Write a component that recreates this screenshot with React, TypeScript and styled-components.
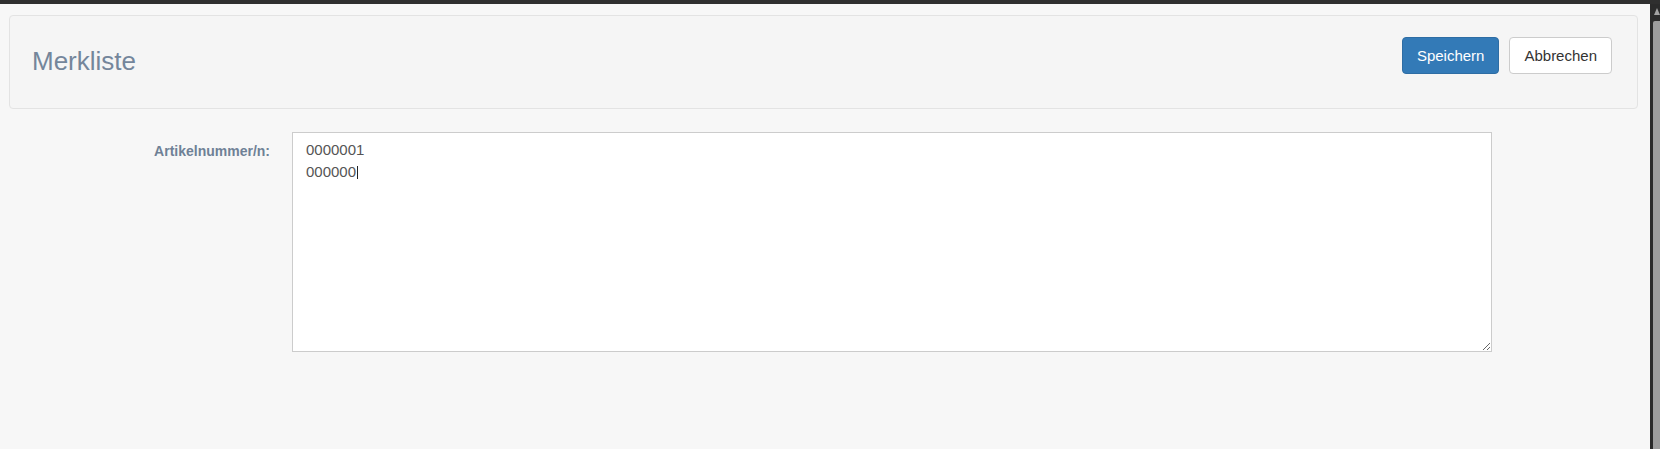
import React from "react";
import styled, { createGlobalStyle } from "styled-components";

const GlobalStyle = createGlobalStyle`
  html, body {
    margin: 0;
    padding: 0;
    background: #f7f7f7;
    font-family: "Liberation Sans", Arial, sans-serif;
  }
  * { box-sizing: border-box; }
`;

const Frame = styled.div`
  display: flex;
  flex-direction: column;
  width: 1660px;
  height: 449px;
  overflow: hidden;
  background: #f7f7f7;
`;

const TopBar = styled.div`
  height: 4px;
  flex: none;
  background: #2f2f2f;
`;

const Body = styled.div`
  flex: 1;
  display: flex;
  min-height: 0;
`;

const Main = styled.main`
  flex: 1;
  min-width: 0;
  padding: 11px 12px 0 9px;
`;

const Rail = styled.div`
  width: 10px;
  flex: none;
  background: #2b2b2b;
  display: flex;
  flex-direction: column;
  align-items: flex-end;
  padding-top: 4px;
  gap: 6px;
`;

const RailArrow = styled.div`
  width: 0;
  height: 0;
  border-left: 3.5px solid transparent;
  border-right: 3.5px solid transparent;
  border-bottom: 7px solid #a3a3a3;
`;

const RailThumb = styled.div`
  width: 7px;
  flex: 1;
  background: #9d9d9d;
  border-radius: 2px 0 0 0;
`;

const Header = styled.div`
  height: 94px;
  background: #f5f5f5;
  border: 1px solid #e3e3e3;
  border-radius: 4px;
  display: flex;
  align-items: flex-start;
  justify-content: space-between;
  padding: 21px 25px 0 22px;
`;

const Title = styled.h3`
  margin: 10px 0 0;
  font-size: 26px;
  font-weight: 400;
  line-height: 1.1;
  color: #74869b;
`;

const Actions = styled.div`
  display: flex;
  gap: 10px;
`;

const Button = styled.button<{ $primary?: boolean }>`
  font-family: "Liberation Sans", Arial, sans-serif;
  font-size: 15px;
  line-height: 21px;
  padding: 7px 14px;
  border-radius: 4px;
  cursor: pointer;
  border: 1px solid ${(p) => (p.$primary ? "#2e6da4" : "#ccc")};
  background: ${(p) => (p.$primary ? "#337ab7" : "#fff")};
  color: ${(p) => (p.$primary ? "#fff" : "#333")};
`;

const FormRow = styled.div`
  display: grid;
  grid-template-columns: 283px 1200px;
  margin-top: 23px;
`;

const Label = styled.label`
  text-align: right;
  padding: 9px 22px 0 0;
  font-size: 14px;
  line-height: 20px;
  font-weight: 700;
  color: #6f8196;
`;

const Field = styled.div`
  position: relative;
  width: 1200px;
  height: 220px;
`;

const TextArea = styled.textarea`
  display: block;
  width: 1200px;
  height: 220px;
  margin: 0;
  padding: 6px 13px;
  border: 1px solid #ccc;
  border-radius: 0;
  background: #fff;
  color: #555;
  font-family: "Liberation Sans", Arial, sans-serif;
  font-size: 15px;
  line-height: 22px;
  resize: both;
  outline: none;
  caret-color: transparent;
`;

const Caret = styled.span`
  position: absolute;
  left: 65px;
  top: 34px;
  width: 1px;
  height: 13px;
  background: #222;
  pointer-events: none;
`;

export default function App() {
  return (
    <>
      <GlobalStyle />
      <Frame>
        <TopBar />
        <Body>
          <Main>
            <Header>
              <Title>Merkliste</Title>
              <Actions>
                <Button $primary type="button">Speichern</Button>
                <Button type="button">Abbrechen</Button>
              </Actions>
            </Header>
            <FormRow>
              <Label htmlFor="artikel">Artikelnummer/n:</Label>
              <Field>
                <TextArea id="artikel" defaultValue={"0000001\n000000"} />
                <Caret />
              </Field>
            </FormRow>
          </Main>
          <Rail>
            <RailArrow />
            <RailThumb />
          </Rail>
        </Body>
      </Frame>
    </>
  );
}
